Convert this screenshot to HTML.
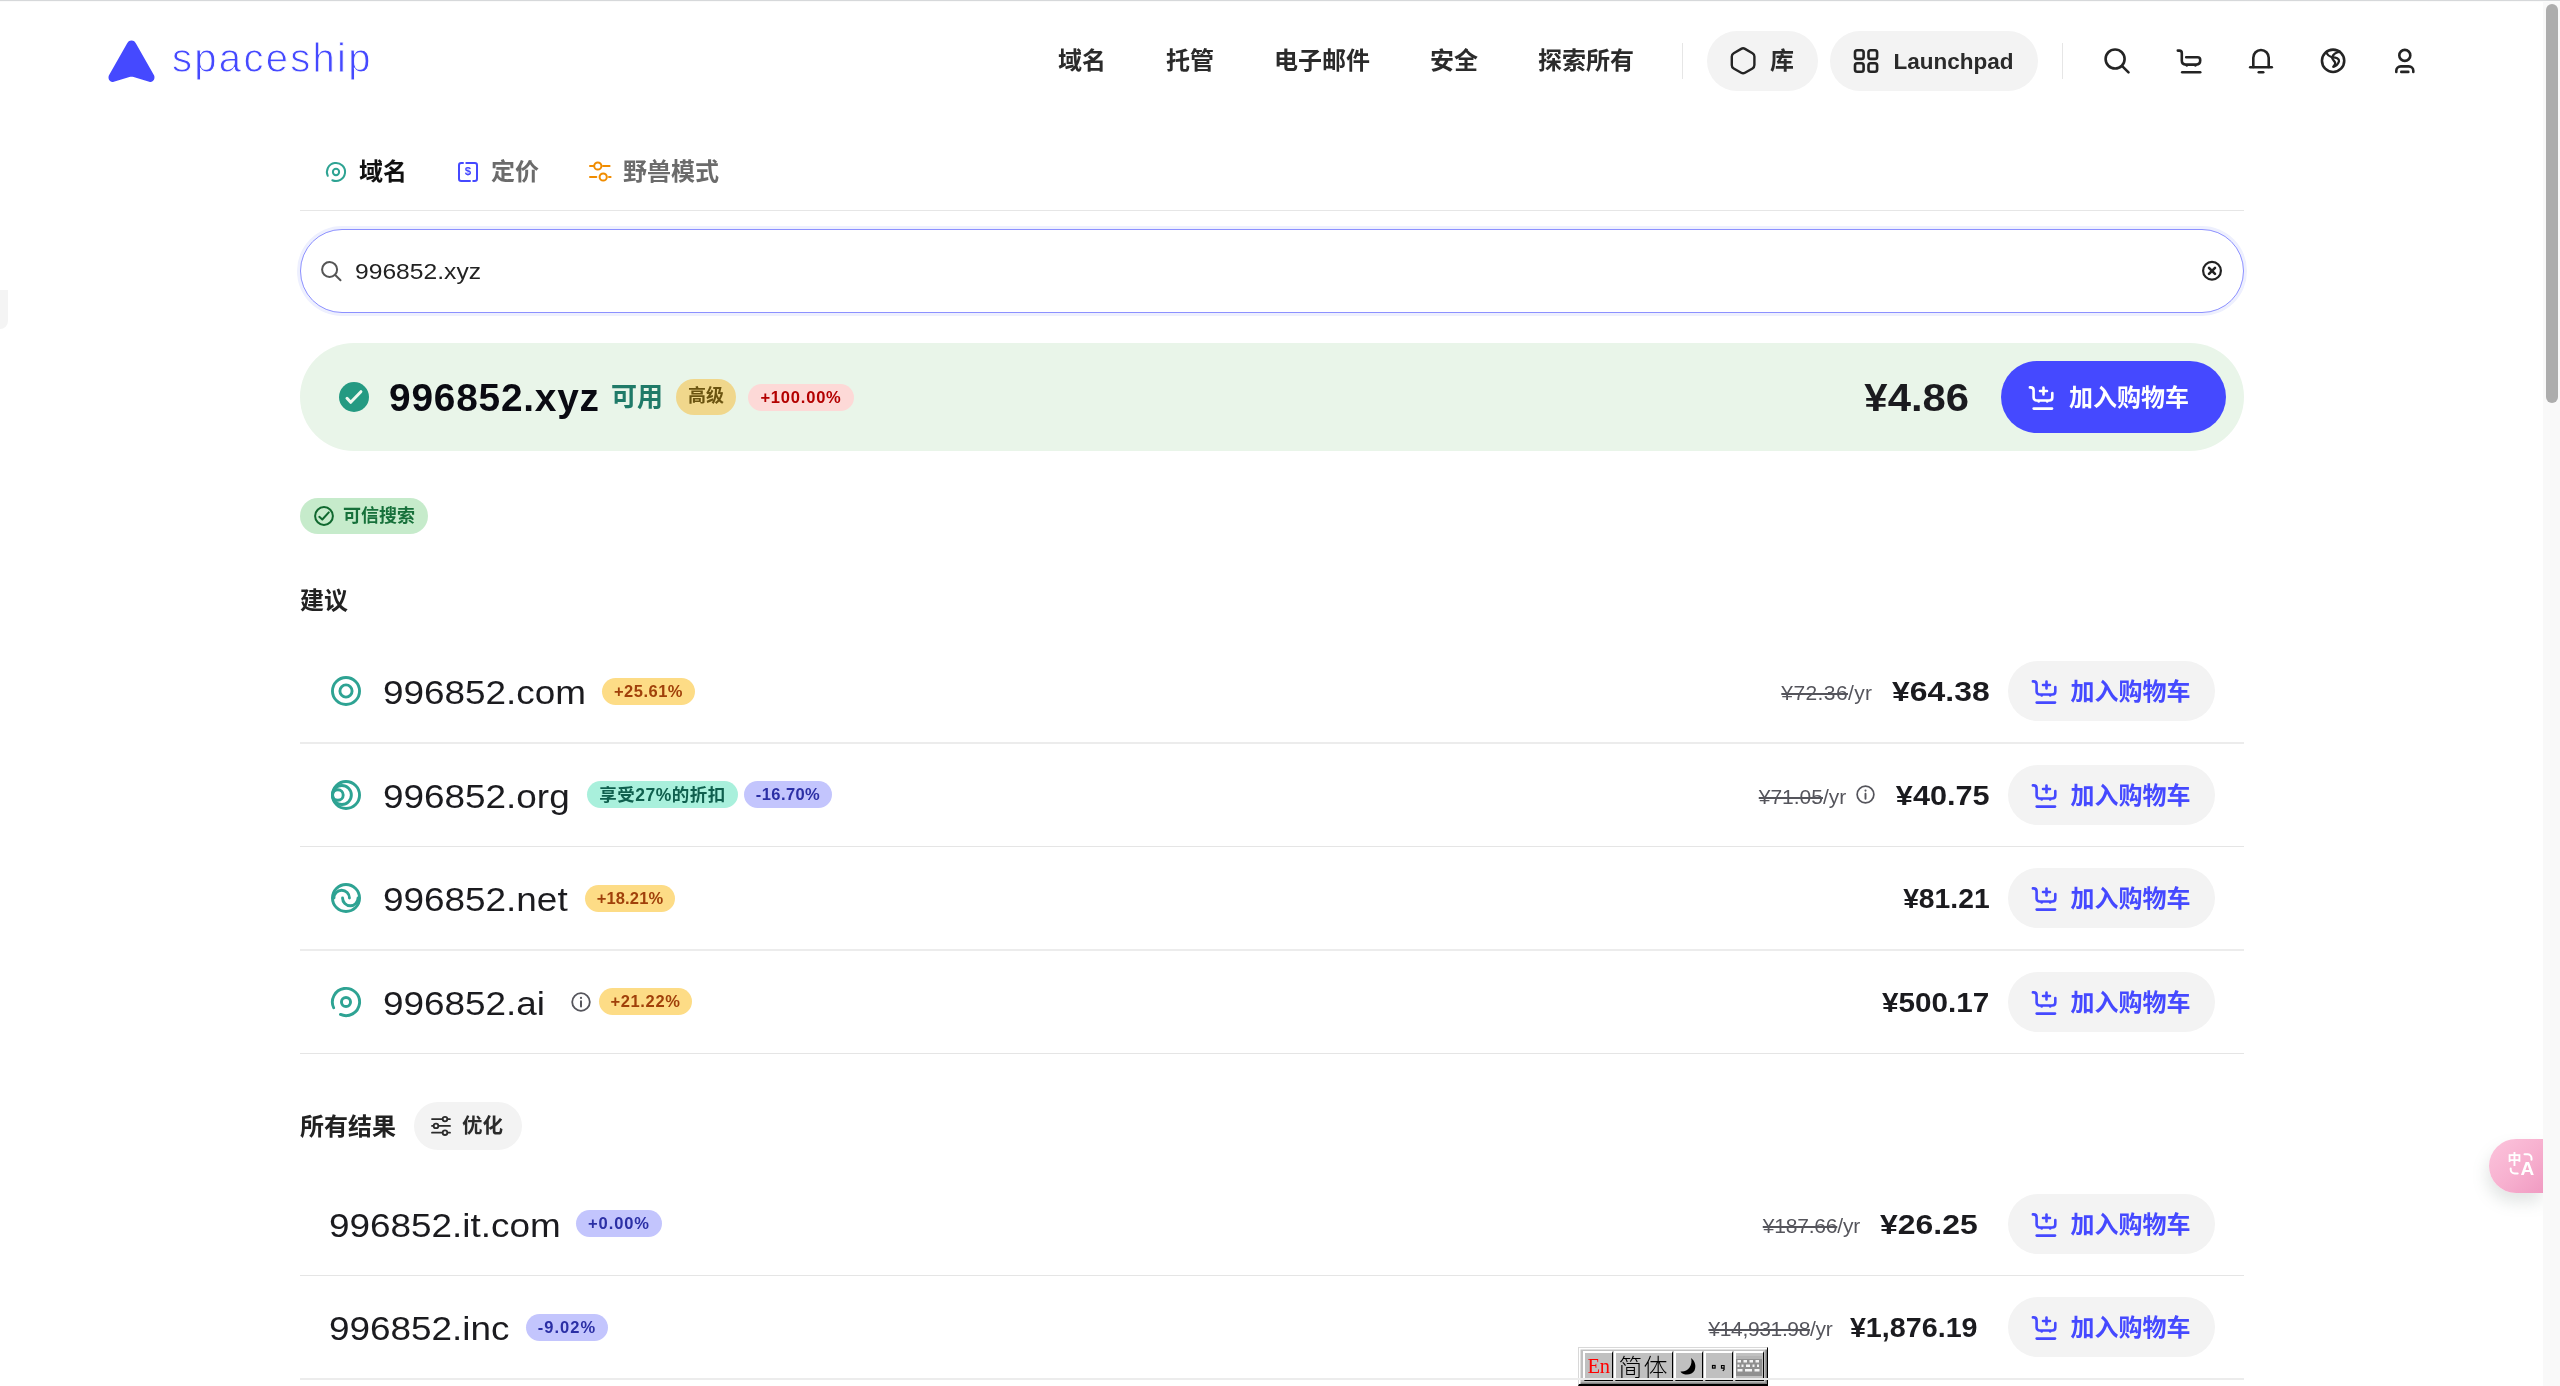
<!DOCTYPE html>
<html lang="zh-CN">
<head>
<meta charset="utf-8">
<title>spaceship</title>
<style>
*{box-sizing:border-box;margin:0;padding:0}
html,body{width:2560px;height:1386px;overflow:hidden;background:#fff}
body{will-change:transform;position:relative;font-family:"Liberation Sans","Noto Sans CJK SC",sans-serif;color:#1b1b1f}
.abs{position:absolute}
.cjk{font-family:"Liberation Sans","Noto Sans CJK SC",sans-serif;font-weight:700}
.t{position:absolute;white-space:nowrap;line-height:1}
svg{position:absolute;overflow:visible}
/* top line */
#topline{left:0;top:0;width:2560px;height:1px;background:#d6d8da;box-shadow:0 1px 0 #fafafa;z-index:6}
/* scrollbar */
#sbtrack{left:2543px;top:0;width:17px;height:1386px;background:#f9f9f9;z-index:5}
#sbthumb{left:2546px;top:4px;width:12px;height:399px;background:#adadad;border-radius:6px;z-index:5}
#lefttab{left:0;top:290px;width:8px;height:39px;background:#f4f4f4;border-radius:0 0 8px 0}
/* header */
.nav{font-size:24px;font-weight:700;color:#2b2b2b;top:49px}
.pill{position:absolute;background:#f3f3f3;border-radius:30px}
.vdiv{position:absolute;width:1px;background:#e6e6e6}
/* tabs */
.tab{font-size:24px;font-weight:700;top:160px}
#tabline{left:300px;top:210px;width:1944px;height:1px;background:#e6e6e6}
/* search */
#search{left:300px;top:229px;width:1944px;height:84px;border-radius:42px;border:1px solid #8c90ff;box-shadow:0 0 0 3px #eef0fe;background:#fff}
/* banner */
#banner{left:300px;top:343px;width:1944px;height:108px;border-radius:54px;background:#e9f5e9}
.badge{position:absolute;border-radius:14px;height:27px;font-weight:700;font-size:16.5px;line-height:27px;text-align:center;white-space:nowrap}
.by{background:#fddc86;color:#a0400a}
.bb{background:#c3c5fd;color:#2b2fa5}
.bg{background:#a9f0dc;color:#0f5f4d}
.sep{position:absolute;left:300px;width:1944px;height:2px;background:#ececec}.sep.l{height:1px;background:#e5e5e5}
.dom{font-size:34px;color:#1b1b1f;transform:scaleX(1.085);transform-origin:0 50%}
.price{font-size:28px;font-weight:700;color:#1b1b1f;top:17px;transform-origin:100% 50%}
.old{font-size:21px;color:#55555c;top:21px}
.btn{position:absolute;left:2008px;width:207px;height:60px;border-radius:30px;background:#f3f3f3}
.btn .t{left:62.500px;top:19px;font-size:24px;font-weight:700;color:#4549ff}

.row{position:absolute;left:300px;width:1944px;height:60px}
.row .dic{left:31px;top:15px}
.right{position:absolute;top:0;height:60px;display:flex;align-items:center;white-space:nowrap}
.right .price{margin-left:19px;display:inline-block}
.cart{left:24px;top:18.700px;color:#4549ff}

.imb{position:absolute;top:3px;height:29.5px;background:#c0c0c0;border-style:solid;border-width:2px 1.3px 1.3px 2px;border-color:#fff #000 #000 #fff;overflow:hidden}
@media (max-width:1400px){html{zoom:.5}}
</style>
</head>
<body>
<div id="topline" class="abs"></div>
<div id="sbtrack" class="abs"></div>
<div id="sbthumb" class="abs"></div>
<div id="lefttab" class="abs"></div>

<!-- HEADER -->
<svg id="logo" style="left:108px;top:40px" width="47" height="43" viewBox="0 0 47 42" preserveAspectRatio="none"><path d="M23.5 0.5c2.2 0 3.6 1.2 4.6 3.2L46 34.5c1.6 3.2-1 7.6-4.8 6.3L25.6 36.2c-1.4-.4-2.8-.4-4.2 0L5.8 40.8C2 42.100-.6 37.700 1 34.500L18.900 3.700c1-2 2.400-3.200 4.600-3.200z" fill="#4549ff"/></svg>
<div class="t" id="brand" style="left:172px;top:38px;font-size:40px;color:#4549ff;letter-spacing:2.3px;-webkit-text-stroke:.9px #fff">spaceship</div>

<div class="t nav cjk" style="left:1058px">域名</div>
<div class="t nav cjk" style="left:1166px">托管</div>
<div class="t nav cjk" style="left:1274px">电子邮件</div>
<div class="t nav cjk" style="left:1430px">安全</div>
<div class="t nav cjk" style="left:1538px">探索所有</div>
<div class="vdiv" style="left:1682px;top:43px;height:36px"></div>
<div class="pill" style="left:1707px;top:31px;width:111px;height:60px"></div>
<div class="t nav cjk" style="left:1770px">库</div>
<div class="pill" style="left:1830px;top:31px;width:208px;height:60px"></div>
<div class="t" id="lp" style="left:1893.5px;top:50.7px;font-size:22.5px;font-weight:700;color:#2b2b2b">Launchpad</div>
<div class="vdiv" style="left:2062px;top:43px;height:36px"></div>

<!-- TABS -->
<div class="t tab cjk" style="left:359px;color:#111">域名</div>
<div class="t tab cjk" style="left:491px;color:#6b6b6b">定价</div>
<div class="t tab cjk" style="left:623px;color:#6b6b6b">野兽模式</div>
<div id="tabline" class="abs"></div>

<!-- SEARCH -->
<div id="search" class="abs"></div>
<div class="t" id="q" style="left:355px;top:260.750px;font-size:22.5px;transform:scaleX(1.095);transform-origin:0 50%;color:#222">996852.xyz</div>

<!-- BANNER -->
<div id="banner" class="abs"></div>
<div class="t" id="bdom" style="left:389px;top:379px;font-size:38.8px;letter-spacing:.8px;font-weight:700;color:#0a0a12">996852.xyz</div>
<div class="t cjk" style="left:611px;top:384px;font-size:26px;color:#1f7a68">可用</div>
<div class="badge cjk" style="left:676px;top:379px;width:60px;height:36px;line-height:35px;border-radius:18px;background:#f0d78c;color:#6b5410;font-size:18px">高级</div>
<div class="badge" style="left:748px;top:384px;width:106px;background:#fdd9d7;color:#b30000;letter-spacing:.8px">+100.00%</div>
<div class="t" id="bprice" style="right:590.500px;top:379.400px;font-size:38.400px;font-weight:700;color:#1b1b1f;transform:scaleX(1.09);transform-origin:100% 50%">¥4.86</div>
<div class="abs" style="left:2001px;top:361px;width:225px;height:72px;border-radius:36px;background:#4549ff"></div>
<div class="t cjk" style="left:2069px;top:385.500px;font-size:24px;color:#fff">加入购物车</div>

<!-- trusted -->
<div class="abs" style="left:300px;top:498px;width:128px;height:36px;border-radius:18px;background:#c6ebcb"></div>
<div class="t cjk" style="left:343px;top:507px;font-size:18px;color:#16703a">可信搜索</div>
<div class="t cjk" style="left:300px;top:589px;font-size:24px;color:#222">建议</div>


<!-- HEADER ICONS (absolute coords) -->
<svg id="hicons" style="left:0;top:0" width="2560" height="120" viewBox="0 0 2560 120" fill="none" stroke="#242424" stroke-width="2.600" stroke-linecap="round" stroke-linejoin="round">
  <!-- hexagon -->
  <path stroke-width="2.4" d="M1741.19 48.85Q1743.10 47.75 1745.01 48.85L1752.50 53.17Q1754.40 54.27 1754.40 56.47L1754.40 65.12Q1754.40 67.32 1752.50 68.42L1745.01 72.75Q1743.10 73.85 1741.19 72.75L1733.70 68.42Q1731.80 67.33 1731.80 65.13L1731.80 56.47Q1731.80 54.27 1733.70 53.17Z"/>
  <!-- launchpad squares -->
  <rect x="1855" y="50.300" width="8.600" height="8.600" rx="2.200"/>
  <rect x="1868.500" y="50.300" width="8.600" height="8.600" rx="2.200"/>
  <rect x="1855" y="63.200" width="8.600" height="8.600" rx="2.200"/>
  <rect x="1868.500" y="63.200" width="8.600" height="8.600" rx="2.200"/>
  <!-- search -->
  <circle cx="2115.100" cy="59" r="9.500"/>
  <path d="M2122.200 66.100l6.300 6.300"/>
  <!-- cart -->
  <path d="M2177.800 50.600h1.600c1.400 0 2.400 1 2.400 2.400v7.500c0 2.500 1.700 4.100 4.100 4.100h10.200c2.500 0 4.100-1.600 4.100-4.100v-.6c0-1.600-1.100-2.700-2.700-2.700h-11.300"/>
  <path d="M2182.200 72.200h18"/><circle cx="2186.8" cy="65.6" r="1.2" fill="#242424" stroke="none"/><circle cx="2195.4" cy="65.6" r="1.2" fill="#242424" stroke="none"/>
  <!-- bell -->
  <path d="M2250.200 67.200h21.600"/>
  <path d="M2253.300 67v-9.300a7.700 7.700 0 0 1 15.400 0v9.300"/>
  <path d="M2258.800 72.200h4.400"/>
  <!-- globe -->
  <circle cx="2333.1" cy="60.8" r="11.15"/>
  <g stroke-width="2.3"><path d="M2326 52.5Q2328 56 2332.1 57.4"/><path d="M2339.8 51.7Q2333.2 53.1 2332.3 57.4"/><path d="M2332.3 57.4C2336.1 57.2 2339.3 58.9 2339 61.2C2338.7 63.5 2336.1 66.1 2333.5 66.7"/><path d="M2332.3 57.4C2332.3 60 2334.9 61.2 2335.2 63.2C2335.4 64.7 2333.8 65.5 2333.5 66.7"/></g>
  <!-- user -->
  <circle cx="2404.800" cy="55.400" r="5.500"/>
  <path d="M2396.300 72v-1.200c0-2.700 2-4.400 4.500-4.400h8c2.500 0 4.500 1.700 4.500 4.400v1.200"/>
  <path d="M2401.300 71.900h7"/>
</svg>

<!-- TAB ICONS -->
<svg style="left:326px;top:162px" width="20" height="20" viewBox="0 0 30 30" fill="none" stroke="#2ea393" stroke-width="3" stroke-linecap="round"><path d="M2.670 20.750A13.600 13.600 0 1 1 9.470 27.420"/><circle cx="15" cy="15" r="4.700"/></svg>
<svg style="left:458px;top:162px" width="20" height="20" viewBox="0 0 20 20" fill="none" stroke="#4549ff" stroke-width="2" stroke-linecap="round" stroke-linejoin="round"><path d="M5 1H3.200C2 1 1 2 1 3.200v13.600C1 18 2 19 3.200 19H12"/><path d="M8.300 1h8.500C18 1 19 2 19 3.200v13.600c0 1.200-1 2.200-2.200 2.200h-1.600"/></svg>
<div class="t" style="left:464.7px;top:165.7px;font-size:11.5px;font-weight:700;color:#4549ff">$</div>
<svg style="left:589px;top:162px" width="22" height="20" viewBox="0 0 22 20" fill="none" stroke="#f08c00" stroke-width="2" stroke-linecap="round"><path d="M1 4h3.600M14 4h6.600"/><circle cx="8.800" cy="4" r="3.600"/><path d="M1 15h6.300M20 15h1.600"/><circle cx="14.200" cy="15" r="3.600"/></svg>

<!-- SEARCH ICONS -->
<svg style="left:320px;top:260px" width="24" height="24" viewBox="0 0 24 24" fill="none" stroke="#555" stroke-width="2" stroke-linecap="round"><circle cx="9.600" cy="9.500" r="7.500"/><path d="M15.200 15l5.300 5.200"/></svg>
<svg style="left:2200px;top:259px" width="24" height="24" viewBox="0 0 24 24" fill="none" stroke="#222" stroke-width="2.200" stroke-linecap="round"><circle cx="12" cy="11.800" r="8.900"/><path d="M9 8.800l6 6M15 8.800l-6 6" stroke-width="2.600"/></svg>

<!-- BANNER ICONS -->
<svg style="left:339px;top:382px" width="30" height="30" viewBox="0 0 30 30"><circle cx="15" cy="15" r="15" fill="#249a82"/><path d="M8 16.300l3.700 4 10.200-10.600" fill="none" stroke="#eef7ee" stroke-width="3" stroke-linecap="round" stroke-linejoin="round"/></svg>
<svg style="left:2029px;top:386px;color:#fff" width="24" height="24" viewBox="0 0 24 24" fill="none" stroke="currentColor" stroke-width="2.6" stroke-linecap="round" stroke-linejoin="round"><path d="M.9 1.4h.7c1.7 0 3 1.3 3 3v7.1c0 1.7 1.3 3 3 3h12.7c1.7 0 3-1.3 3-3V7.05"/><path d="M14.5 1.55v7M11 5.05h7"/><path d="M4.7 22.6H23"/><circle cx="9.7" cy="15.4" r="1.3" fill="currentColor" stroke="none"/><circle cx="18.2" cy="15.4" r="1.3" fill="currentColor" stroke="none"/></svg>

<!-- trusted icon -->
<svg style="left:314px;top:506px" width="20" height="20" viewBox="0 0 20 20" fill="none" stroke="#10682f" stroke-width="2" stroke-linecap="round" stroke-linejoin="round"><circle cx="10" cy="10" r="8.900"/><path d="M5.300 10.800l3 2.700 6.500-7.100"/></svg>

<!-- optimize icon -->
<svg style="left:431px;top:1115px;z-index:3" width="20" height="22" viewBox="0 0 20 22" fill="none" stroke="#2b2b2b" stroke-width="1.800" stroke-linecap="round"><path d="M1 4.100h10.200M16.800 4.100h2.200"/><circle cx="14" cy="4.100" r="2.300"/><path d="M1 10.900h1.200M7.800 10.900h11.200"/><circle cx="5" cy="10.900" r="2.300"/><path d="M1 17.700h10.200M16.800 17.700h2.200"/><circle cx="14" cy="17.700" r="2.300"/></svg>

<!-- translate button -->
<div class="abs" style="left:2489px;top:1139px;width:54px;height:54px;border-radius:27px 0 0 27px;background:linear-gradient(135deg,#fcc4dc 0%,#f7b0cf 55%,#f09bc2 100%);box-shadow:-2px 9px 16px rgba(110,125,118,.2)"></div>
<div class="t cjk" style="left:2507.500px;top:1151.500px;font-size:14px;color:#fff">中</div>
<div class="t" style="left:2520.500px;top:1158.500px;font-size:19px;font-weight:700;color:#fff">A</div>
<svg style="left:2489px;top:1139px" width="54" height="54" viewBox="0 0 54 54" fill="none" stroke="#fff" stroke-width="2" stroke-linecap="round"><path d="M35.500 15.200h3a4 4 0 0 1 4 4v1.500"/><path d="M21.700 29.500v1a4 4 0 0 0 4 4h3"/></svg>

<!-- IME toolbar -->
<div id="ime" class="abs" style="left:1578px;top:1347px;width:190px;height:39px;background:#c0c0c0;border-style:solid;border-width:1px 1.5px 2px 1px;border-color:#d8d8d8 #000 #000 #d8d8d8;box-shadow:inset 1.5px 1.5px 0 #fff,inset -1.5px -1.5px 0 #808080">
  <div class="imb" style="left:4px;width:30px"><span style="color:#f00;font-family:'Liberation Serif',serif;font-size:20.5px;position:absolute;left:2.5px;top:3px;line-height:1;letter-spacing:-.3px">En</span></div>
  <div class="imb" style="left:35px;width:59px"><span style="color:#000;font-family:'Liberation Sans','Noto Sans CJK SC',sans-serif;font-weight:300;font-size:24px;position:absolute;left:2.5px;top:2.5px;line-height:1;letter-spacing:1px;white-space:nowrap">简体</span></div>
  <div class="imb" style="left:95px;width:29px"><svg style="left:3px;top:4px" width="20" height="20" viewBox="0 0 20 20"><path d="M12 1c4 3 5.500 8 3.500 12.500C13.500 17 9 18.500 4.500 17 3 16.500 2 15.500 1.500 14.500c3.500.5 7-1 9-4s2.500-6.500 1.500-9.500z" fill="#000"/></svg></div>
  <div class="imb" style="left:125px;width:29px"><svg style="left:3px;top:4px" width="20" height="20" viewBox="0 0 20 20" fill="none" stroke="#000" stroke-width="1.200"><rect x="3.500" y="8.500" width="2.600" height="2.600"/><path d="M12.500 8.500h2.600v2.600h-2.600zM15.100 11.100v1.500l-1.300 1.300" /></svg></div>
  <div class="imb" style="left:155px;width:30px"><svg style="left:0px;top:3px" width="26" height="20" viewBox="0 0 26 20"><rect x="0" y="0" width="26" height="20" fill="#909090"/><rect x="0" y="0" width="26" height="3" fill="#b4b4b4"/><g fill="#f4f4f4"><rect x="1.500" y="4" width="3.500" height="2.500"/><rect x="7.500" y="4" width="3.500" height="2.500"/><rect x="13.500" y="4" width="3.500" height="2.500"/><rect x="19.500" y="4" width="3.500" height="2.500"/><rect x="1.500" y="8.500" width="2" height="2.500"/><rect x="5.500" y="8.500" width="2" height="2.500"/><rect x="10" y="8.500" width="4" height="2.500"/><rect x="16.500" y="8.500" width="2" height="2.500"/><rect x="21" y="8.500" width="2" height="2.500"/><rect x="1.500" y="13" width="5" height="2.500"/><rect x="9" y="13" width="7" height="2.500"/><rect x="18.500" y="13" width="5" height="2.500"/></g></svg></div>
</div>

<!-- ROWS -->
<div class="row" style="top:661px"><svg class="dic" width="30" height="30" viewBox="0 0 30 30" fill="none" stroke="#2ea393" stroke-width="2.900"><circle cx="15" cy="15" r="13.550"/><circle cx="15" cy="15" r="6.100"/></svg><div class="t dom" style="left:83px;top:14px">996852.com</div><div class="badge by" style="left:302px;top:17px;width:93px;letter-spacing:.5px">+25.61%</div><div class="t old" style="right:371.5px;letter-spacing:0.4px"><s>¥72.36</s>/yr</div><div class="t price" style="right:254.5px;transform:scaleX(1.14)">¥64.38</div><div class="btn" style="left:1708px;top:0"><svg class="cart" width="24" height="24" viewBox="0 0 24 24" fill="none" stroke="currentColor" stroke-width="2.6" stroke-linecap="round" stroke-linejoin="round"><path d="M.9 1.4h.7c1.7 0 3 1.3 3 3v7.1c0 1.7 1.3 3 3 3h12.7c1.7 0 3-1.3 3-3V7.05"/><path d="M14.5 1.55v7M11 5.05h7"/><path d="M4.7 22.6H23"/><circle cx="9.7" cy="15.4" r="1.3" fill="currentColor" stroke="none"/><circle cx="18.2" cy="15.4" r="1.3" fill="currentColor" stroke="none"/></svg><div class="t cjk">加入购物车</div></div></div>
<div class="sep" style="top:742px"></div>
<div class="row" style="top:765px"><svg class="dic" width="30" height="30" viewBox="0 0 30 30" fill="none" stroke="#2ea393" stroke-width="2.900"><circle cx="15" cy="15" r="13.550"/><circle cx="10.900" cy="15" r="9.450"/><circle cx="6.900" cy="15" r="5.300"/></svg><div class="t dom" style="left:83px;top:14px">996852.org</div><div class="badge bg cjk" style="left:287px;top:16px;width:151px;font-size:17.5px;letter-spacing:.5px;line-height:29.5px">享受27%的折扣</div><div class="badge bb" style="left:444px;top:16px;width:88px;letter-spacing:.4px">-16.70%</div><svg style="left:1555.5px;top:20px" width="19" height="19" viewBox="0 0 20 20" fill="none" stroke="#55555c" stroke-width="1.800"><circle cx="10" cy="10" r="8.800"/><path d="M10 9.200v5.200" stroke-linecap="round" stroke-width="2"/><circle cx="10" cy="5.900" r="1.100" fill="#55555c" stroke="none"/></svg><div class="t old" style="right:397.7px;letter-spacing:0px"><s>¥71.05</s>/yr</div><div class="t price" style="right:254.5px;transform:scaleX(1.095)">¥40.75</div><div class="btn" style="left:1708px;top:0"><svg class="cart" width="24" height="24" viewBox="0 0 24 24" fill="none" stroke="currentColor" stroke-width="2.6" stroke-linecap="round" stroke-linejoin="round"><path d="M.9 1.4h.7c1.7 0 3 1.3 3 3v7.1c0 1.7 1.3 3 3 3h12.7c1.7 0 3-1.3 3-3V7.05"/><path d="M14.5 1.55v7M11 5.05h7"/><path d="M4.7 22.6H23"/><circle cx="9.7" cy="15.4" r="1.3" fill="currentColor" stroke="none"/><circle cx="18.2" cy="15.4" r="1.3" fill="currentColor" stroke="none"/></svg><div class="t cjk">加入购物车</div></div></div>
<div class="sep l" style="top:846px"></div>
<div class="row" style="top:868px"><svg class="dic" width="30" height="30" viewBox="0 0 30 30" fill="none" stroke="#2ea393" stroke-width="2.900" stroke-linecap="round"><circle cx="15" cy="15" r="13.550"/><path d="M2.950 15A7.750 7.750 0 0 1 18.450 15"/><path d="M27.050 15A7.750 7.750 0 0 1 11.550 15"/></svg><div class="t dom" style="left:83px;top:14px">996852.net</div><div class="badge by" style="left:285px;top:17px;width:90px;letter-spacing:.13px">+18.21%</div><div class="t price" style="right:254.5px;transform:scaleX(1.01)">¥81.21</div><div class="btn" style="left:1708px;top:0"><svg class="cart" width="24" height="24" viewBox="0 0 24 24" fill="none" stroke="currentColor" stroke-width="2.6" stroke-linecap="round" stroke-linejoin="round"><path d="M.9 1.4h.7c1.7 0 3 1.3 3 3v7.1c0 1.7 1.3 3 3 3h12.7c1.7 0 3-1.3 3-3V7.05"/><path d="M14.5 1.55v7M11 5.05h7"/><path d="M4.7 22.6H23"/><circle cx="9.7" cy="15.4" r="1.3" fill="currentColor" stroke="none"/><circle cx="18.2" cy="15.4" r="1.3" fill="currentColor" stroke="none"/></svg><div class="t cjk">加入购物车</div></div></div>
<div class="sep" style="top:949px"></div>
<div class="row" style="top:972px"><svg class="dic" width="30" height="30" viewBox="0 0 30 30" fill="none" stroke="#2ea393" stroke-width="2.900" stroke-linecap="round"><path d="M2.670 20.750A13.600 13.600 0 1 1 9.470 27.420"/><circle cx="15" cy="15" r="4.550"/></svg><div class="t dom" style="left:83px;top:14px">996852.ai</div><svg style="left:271px;top:19.5px" width="20" height="20" viewBox="0 0 20 20" fill="none" stroke="#55555c" stroke-width="1.800"><circle cx="10" cy="10" r="8.800"/><path d="M10 9.200v5.200" stroke-linecap="round" stroke-width="2"/><circle cx="10" cy="5.900" r="1.100" fill="#55555c" stroke="none"/></svg><div class="badge by" style="left:299px;top:16px;width:93px;letter-spacing:.63px">+21.22%</div><div class="t price" style="right:254.5px;transform:scaleX(1.06)">¥500.17</div><div class="btn" style="left:1708px;top:0"><svg class="cart" width="24" height="24" viewBox="0 0 24 24" fill="none" stroke="currentColor" stroke-width="2.6" stroke-linecap="round" stroke-linejoin="round"><path d="M.9 1.4h.7c1.7 0 3 1.3 3 3v7.1c0 1.7 1.3 3 3 3h12.7c1.7 0 3-1.3 3-3V7.05"/><path d="M14.5 1.55v7M11 5.05h7"/><path d="M4.7 22.6H23"/><circle cx="9.7" cy="15.4" r="1.3" fill="currentColor" stroke="none"/><circle cx="18.2" cy="15.4" r="1.3" fill="currentColor" stroke="none"/></svg><div class="t cjk">加入购物车</div></div></div>
<div class="sep l" style="top:1053px"></div>
<div class="t cjk" style="left:300px;top:1114.5px;font-size:24px;color:#222">所有结果</div>
<div class="pill" style="left:414px;top:1102px;width:108px;height:48px;border-radius:24px"></div>
<div class="t cjk" style="left:462px;top:1115.5px;font-size:20.5px;color:#2b2b2b">优化</div>
<div class="row" style="top:1194px"><div class="t dom" style="left:29px;top:14px">996852.it.com</div><div class="badge bb" style="left:276px;top:16px;width:86px;letter-spacing:.9px">+0.00%</div><div class="t old" style="right:384px;letter-spacing:-0.2px"><s>¥187.66</s>/yr</div><div class="t price" style="right:266.8px;transform:scaleX(1.14)">¥26.25</div><div class="btn" style="left:1708px;top:0"><svg class="cart" width="24" height="24" viewBox="0 0 24 24" fill="none" stroke="currentColor" stroke-width="2.6" stroke-linecap="round" stroke-linejoin="round"><path d="M.9 1.4h.7c1.7 0 3 1.3 3 3v7.1c0 1.7 1.3 3 3 3h12.7c1.7 0 3-1.3 3-3V7.05"/><path d="M14.5 1.55v7M11 5.05h7"/><path d="M4.7 22.6H23"/><circle cx="9.7" cy="15.4" r="1.3" fill="currentColor" stroke="none"/><circle cx="18.2" cy="15.4" r="1.3" fill="currentColor" stroke="none"/></svg><div class="t cjk">加入购物车</div></div></div>
<div class="sep l" style="top:1275px"></div>
<div class="row" style="top:1297px"><div class="t dom" style="left:29px;top:14px">996852.inc</div><div class="badge bb" style="left:226px;top:17px;width:82px;letter-spacing:1.05px">-9.02%</div><div class="t old" style="right:411.7px;letter-spacing:-0.35px"><s>¥14,931.98</s>/yr</div><div class="t price" style="right:266.8px;transform:scaleX(1.025)">¥1,876.19</div><div class="btn" style="left:1708px;top:0"><svg class="cart" width="24" height="24" viewBox="0 0 24 24" fill="none" stroke="currentColor" stroke-width="2.6" stroke-linecap="round" stroke-linejoin="round"><path d="M.9 1.4h.7c1.7 0 3 1.3 3 3v7.1c0 1.7 1.3 3 3 3h12.7c1.7 0 3-1.3 3-3V7.05"/><path d="M14.5 1.55v7M11 5.05h7"/><path d="M4.7 22.6H23"/><circle cx="9.7" cy="15.4" r="1.3" fill="currentColor" stroke="none"/><circle cx="18.2" cy="15.4" r="1.3" fill="currentColor" stroke="none"/></svg><div class="t cjk">加入购物车</div></div></div>
<div class="sep" style="top:1378px"></div>

</body>
</html>
